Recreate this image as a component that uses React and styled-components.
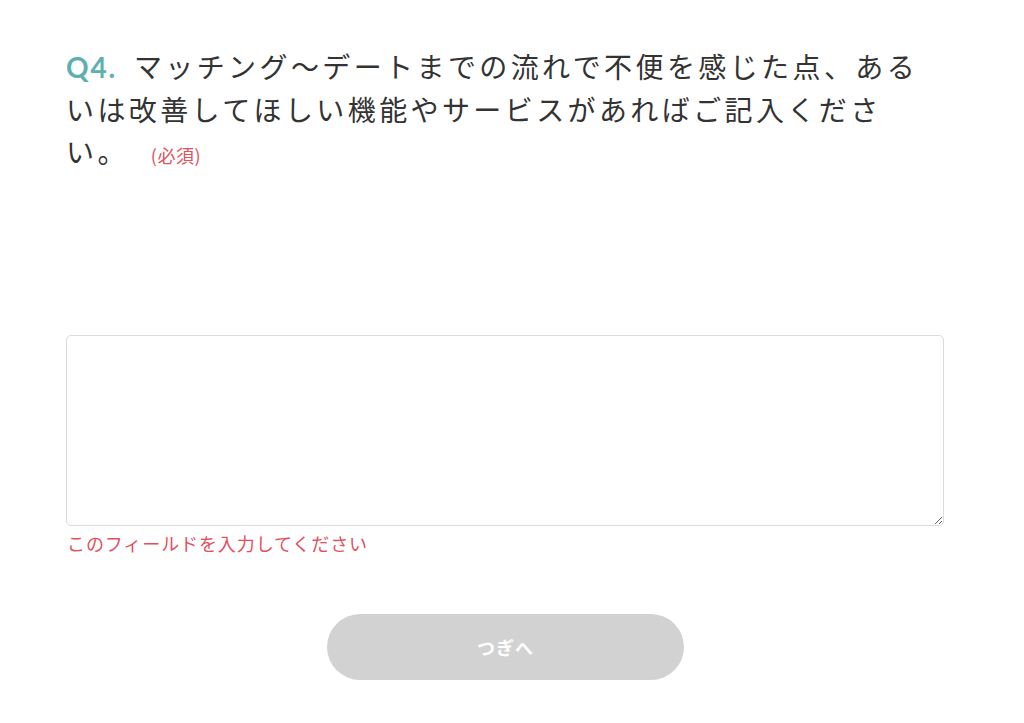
import React from 'react';
import styled, { createGlobalStyle } from 'styled-components';

const GlobalStyle = createGlobalStyle`
  body {
    margin: 0;
    background: #fff;
    font-family: "Noto Sans CJK JP", "Noto Sans", sans-serif;
    color: #333;
  }
`;

const Page = styled.div`
  padding: 45px 80px 40px 66px;
  display: flex;
  flex-direction: column;
`;

const Question = styled.h2`
  margin: 0;
  width: 868px;
  font-size: 28px;
  font-weight: 400;
  line-height: 42px;
  letter-spacing: 3.4px;
  color: #333;
  line-break: strict;
`;

const QNum = styled.span`
  font-family: Lato, "Noto Sans", sans-serif;
  font-weight: 700;
  color: #5eb0b0;
  margin-right: 17px;
  letter-spacing: 1.8px;
`;

const Required = styled.span`
  white-space: nowrap;
  font-size: 18px;
  letter-spacing: 0.5px;
  color: #e3505c;
  margin-left: 22px;
`;

const Field = styled.textarea`
  margin-top: 159px;
  width: 878px;
  height: 191px;
  box-sizing: border-box;
  border: 1px solid #dcdcdc;
  border-radius: 5px;
  background: #fff;
  font-family: inherit;
  font-size: 16px;
  padding: 10px;
  outline: none;
`;

const ErrorText = styled.p`
  margin: 4px 0 0 1px;
  font-size: 18px;
  line-height: 26px;
  letter-spacing: 0.9px;
  color: #e3505c;
`;

const Actions = styled.div`
  width: 878px;
  display: flex;
  justify-content: center;
  margin-top: 58px;
`;

const NextButton = styled.button`
  width: 357px;
  height: 66px;
  border: none;
  border-radius: 33px;
  background: #d2d2d2;
  color: #fff;
  font-family: inherit;
  font-size: 18px;
  font-weight: 700;
  letter-spacing: 1px;
  padding: 0;
  margin-left: 1px;
`;

export default function App() {
  return (
    <>
      <GlobalStyle />
      <Page>
        <Question>
          <QNum>Q4.</QNum>
          マッチング〜デートまでの流れで不便を感じた点、あるいは改善してほしい機能やサービスがあればご記入ください。
          <Required>(必須)</Required>
        </Question>
        <Field />
        <ErrorText>このフィールドを入力してください</ErrorText>
        <Actions>
          <NextButton disabled>つぎへ</NextButton>
        </Actions>
      </Page>
    </>
  );
}
